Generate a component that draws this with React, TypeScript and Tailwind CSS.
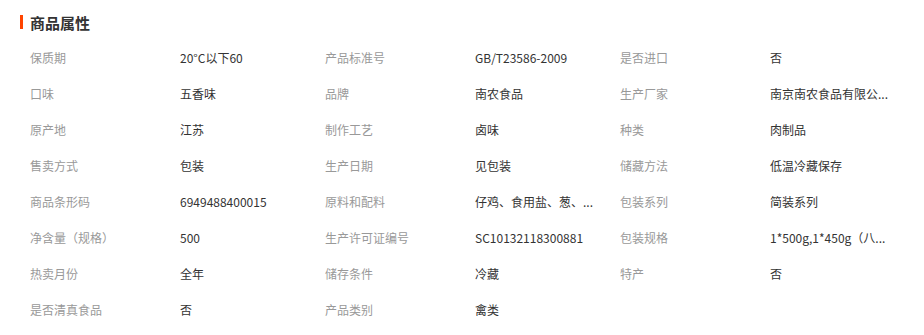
const ROWS: [string, string][][] = [
  [["保质期", "20°C以下60"], ["产品标准号", "GB/T23586-2009"], ["是否进口", "否"]],
  [["口味", "五香味"], ["品牌", "南农食品"], ["生产厂家", "南京南农食品有限公..."]],
  [["原产地", "江苏"], ["制作工艺", "卤味"], ["种类", "肉制品"]],
  [["售卖方式", "包装"], ["生产日期", "见包装"], ["储藏方法", "低温冷藏保存"]],
  [["商品条形码", "6949488400015"], ["原料和配料", "仔鸡、食用盐、葱、..."], ["包装系列", "简装系列"]],
  [["净含量（规格）", "500"], ["生产许可证编号", "SC10132118300881"], ["包装规格", "1*500g,1*450g（八..."]],
  [["热卖月份", "全年"], ["储存条件", "冷藏"], ["特产", "否"]],
  [["是否清真食品", "否"], ["产品类别", "禽类"]],
]

function Cell({ label, value }: { label: string; value: string }) {
  return (
    <div className="flex w-[295px] items-center">
      <span className="w-[150px] shrink-0 text-[#999]">{label}</span>
      <span className="whitespace-nowrap text-[#333]">{value}</span>
    </div>
  )
}

export default function App() {
  return (
    <div
      className="h-[335px] w-[924px] bg-white text-[12px]"
      style={{ fontFamily: '"Noto Sans CJK SC", "Noto Sans", sans-serif' }}
    >
      <div className="flex h-[40px] items-center pl-[20px] pt-[4px]">
        <span className="mr-[7px] h-[14px] w-[3px] bg-[#ff4400]" />
        <h2 className="text-[15px] font-bold leading-none text-[#333]">商品属性</h2>
      </div>
      <div className="pl-[30px]">
        {ROWS.map((row, i) => (
          <div key={i} className="flex h-[36px] items-center">
            {row.map(([label, value]) => (
              <Cell key={label} label={label} value={value} />
            ))}
          </div>
        ))}
      </div>
    </div>
  )
}
